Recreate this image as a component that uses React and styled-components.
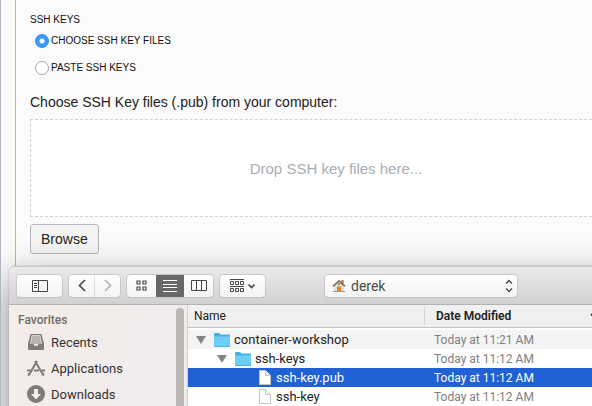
import React, { useState } from "react";
import styled, { createGlobalStyle } from "styled-components";

const GlobalStyle = createGlobalStyle`
  *, *::before, *::after { box-sizing: border-box; }
  body {
    margin: 0;
    background: #fbfbfb;
    color: #222;
    font-family: "Liberation Sans", Arial, sans-serif;
    overflow: hidden;
  }
  button, input, select { font: inherit; color: inherit; margin: 0; }
`;

const system = `Roboto, "Noto Sans", sans-serif`;

const Page = styled.div`
  position: relative;
  min-height: 100vh;
  padding-left: 14px;
  border-left: 1px solid #b0b5c4;
  overflow: hidden;
`;

const Panel = styled.main`
  min-height: 100vh;
  padding: 13px 0 0 14px;
  border-left: 1px solid #b0b5c4;
`;

const Fieldset = styled.fieldset`
  margin: 0;
  padding: 0;
  border: 0;
`;

const Legend = styled.legend`
  padding: 0;
  color: #111;
  font-size: 10px;
  line-height: 14px;
`;

const RadioLabel = styled.label`
  display: flex;
  align-items: center;
  gap: 2px;
  height: 27px;
  padding-left: 5px;
  color: #111;
  font-size: 10px;
`;

const Radio = styled.input`
  appearance: none;
  width: 14px;
  height: 14px;
  border: 1px solid #a9a9a9;
  border-radius: 50%;
  background: #fff;
  &:checked {
    border-color: #2c8df5;
    background: radial-gradient(circle, #fff 2px, #3b99fc 3px);
  }
`;

const Prompt = styled.p`
  margin: 13px 0 8px;
  font-size: 14px;
  line-height: 17px;
`;

const DropZone = styled.div`
  display: flex;
  align-items: center;
  justify-content: center;
  height: 98px;
  margin-right: -50px;
  border: 1px dashed #d0d2d6;
  background: #fff;
  color: #a9aeb6;
  font-size: 15px;
`;

const Browse = styled.button`
  height: 30px;
  margin-top: 7px;
  padding: 0 10px;
  border: 1px solid #b0b6c2;
  border-radius: 3px;
  background: #f4f4f4;
  font-size: 14px;
`;

const FinderWindow = styled.section`
  position: absolute;
  inset: 266px 0 0 8px;
  display: flex;
  flex-direction: column;
  overflow: hidden;
  border-top: 1px solid #c9c9c9;
  border-radius: 6px 0 0 0;
  font-family: ${system};
  font-size: 13px;
`;

const WindowShadow = styled.div`
  position: absolute;
  inset: 266px -40px -40px 8px;
  border-radius: 6px 0 0 0;
  box-shadow: 0 12px 36px rgba(0, 0, 0, 0.45), 0 0 1px rgba(0, 0, 0, 0.5);
`;

const Toolbar = styled.header`
  display: flex;
  flex: none;
  align-items: center;
  height: 38px;
  padding: 0 75px 0 8px;
  border-bottom: 1px solid #b4b2b4;
  background: linear-gradient(#ebe9eb, #d2d0d2);
`;

const Group = styled.div`
  display: flex;
  flex: none;
  gap: ${(p) => (p.$split ? "1px" : "0")};
  margin-right: 7px;
  border-radius: 4px;
  box-shadow: 0 0 0 1px #cac8ca, 0 1px 1px #aaa8aa;
`;

const ToolButton = styled.button`
  display: flex;
  align-items: center;
  justify-content: center;
  width: ${(p) => p.$width}px;
  height: 22px;
  padding: 0;
  border: 0;
  background: ${(p) => (p.$active ? "#686868" : "linear-gradient(#fff, #f3f3f3)")};
  color: ${(p) => (p.$active ? "#fff" : p.$dim ? "#b5b5b5" : "#484848")};
  &:first-child { border-radius: 4px 0 0 4px; }
  &:last-child { border-radius: 0 4px 4px 0; }
  &:only-child { border-radius: 4px; }
`;

const PathControl = styled.label`
  display: flex;
  align-items: center;
  width: 192px;
  height: 22px;
  margin-left: auto;
  padding: 0 4px 0 7px;
  border-radius: 4px;
  background: linear-gradient(#fff, #f3f3f3);
  box-shadow: 0 0 0 1px #cac8ca, 0 1px 1px #aaa8aa;
  color: #4b4b4b;
`;

const PathSelect = styled.select`
  appearance: none;
  flex: 1;
  min-width: 0;
  padding: 0 0 0 5px;
  border: 0;
  background: transparent;
  font-size: 14px;
`;

const Body = styled.div`
  display: flex;
  flex: 1;
  min-height: 0;
`;

const Sidebar = styled.nav`
  display: flex;
  flex: none;
  justify-content: space-between;
  width: 179px;
  padding: 3px 3px 0 9px;
  border-right: 1px solid #d4d0cf;
  background: linear-gradient(110deg, #f3ece8, #f1edee);
`;

const SidebarTitle = styled.h2`
  margin: 5px 0 1px;
  color: #706c6a;
  font-size: 12px;
  font-weight: 500;
  line-height: 15px;
`;

const Place = styled.a`
  display: flex;
  align-items: center;
  gap: 6px;
  height: 26px;
  padding-left: 9px;
  color: #343230;
  font-size: 13px;
  text-decoration: none;
`;

const Thumb = styled.div`
  width: 8px;
  border-radius: 4px 4px 0 0;
  background: #bcb7b5;
`;

const Listing = styled.div`
  flex: 1;
  min-width: 0;
  overflow: hidden;
  background: #fff;
`;

const Table = styled.table`
  width: 100%;
  table-layout: fixed;
  border-spacing: 0;
  tbody::before { content: ""; display: block; height: 2px; }
`;

const HeadCell = styled.th`
  width: ${(p) => (p.$date ? "168px" : "auto")};
  height: 23px;
  padding: 0 0 0 ${(p) => (p.$date ? 0 : 6)}px;
  border-bottom: 1px solid #c4c4c4;
  background: #f0f0f0;
  font-size: 12px;
  font-weight: ${(p) => (p.$date ? 600 : 400)};
  text-align: left;
`;

const DateHead = styled.span`
  display: flex;
  align-items: center;
  justify-content: space-between;
  height: 18px;
  padding-left: 11px;
  border-left: 1px solid #d4d4d4;
  white-space: nowrap;
`;

const Row = styled.tr`
  height: 19px;
  background: ${(p) => (p.$selected ? "#2062d5" : p.$striped ? "#f4f4f4" : "#fff")};
  color: ${(p) => (p.$selected ? "#fff" : "#222")};
`;

const NameCell = styled.td`
  padding: 0 0 0 8px;
  line-height: 18px;
  white-space: nowrap;
`;

const DateCell = styled.td`
  padding: 0 0 0 10px;
  color: ${(p) => (p.$muted ? "#808080" : "inherit")};
  font-size: 12px;
  line-height: 18px;
  white-space: nowrap;
`;

const FileName = styled.span`
  display: flex;
  align-items: center;
  gap: ${(p) => (p.$file ? 5 : 4)}px;
  height: 18px;
  padding-left: ${(p) => p.$depth * 21}px;
`;

const Disclosure = styled.button`
  display: flex;
  margin-right: 4px;
  padding: 0;
  border: 0;
  background: none;
`;

const Svg = ({ w, h, children, ...rest }) => (
  <svg width={w} height={h} viewBox={`0 0 ${w} ${h}`} fill="none" stroke="currentColor" aria-hidden="true" {...rest}>
    {children}
  </svg>
);

const SidebarIcon = () => (
  <Svg w={16} h={12}>
    <path d="M.5.5h15v11H.5zM6.5.5v11M2 3.5h3M2 5.5h3M2 7.5h3" />
  </Svg>
);
const ChevronIcon = ({ right }) => (
  <Svg w={8} h={13} strokeWidth="1.7">
    <path d={right ? "M1 1l5.5 5.5L1 12" : "M7 1L1.5 6.5 7 12"} />
  </Svg>
);
const GridIcon = () => (
  <Svg w={11} h={11}>
    <path d="M1 1h3v3H1zM7 1h3v3H7zM1 7h3v3H1zM7 7h3v3H7z" strokeWidth="1.2" />
  </Svg>
);
const ListIcon = () => (
  <Svg w={14} h={12}>
    <path d="M0 .5h14M0 4.5h14M0 7.5h14M0 11.5h14" />
  </Svg>
);
const ColumnsIcon = () => (
  <Svg w={16} h={11}>
    <path d="M.5.5h15v10H.5zM5.5.5v10M10.5.5v10" />
  </Svg>
);
const ArrangeIcon = () => (
  <Svg w={25} h={14}>
    <path d="M0 .5h14M0 7.5h14M.5 2.5h3v3h-3zM5.5 2.5h3v3h-3zM10.5 2.5h3v3h-3zM.5 9.5h3v3h-3zM5.5 9.5h3v3h-3zM10.5 9.5h3v3h-3z" />
    <path d="M18.5 5.5l3 3 3-3" strokeWidth="1.6" />
  </Svg>
);
const HomeIcon = () => (
  <Svg w={14} h={13} stroke="none">
    <path d="M9.5 1h2v4h-2z" fill="#a06a49" />
    <path d="M2 6l5-4 5 4v6.5H2z" fill="#dededb" />
    <path d="M1 7.3L7 1.8l6 5.5" fill="none" stroke="#8c6b4c" strokeWidth="1.6" />
    <circle cx="7" cy="5" r="1" fill="#66798a" />
    <path d="M5 7.5h4v5H5z" fill="#e98326" />
    <path d="M1 12.5h12" stroke="#9b9b90" />
  </Svg>
);
const StepperIcon = () => (
  <Svg w={8} h={14} strokeWidth="1.4">
    <path d="M1 4.5l3-3 3 3M1 9.5l3 3 3-3" />
  </Svg>
);
const RecentsIcon = () => (
  <Svg w={18} h={18} stroke="none">
    <path d="M3.5 1h11L17 11v5q0 1-1 1H2q-1 0-1-1v-5z" fill="#817b78" />
    <path d="M4.7 2.2h8.6l1.6 8.6h-3.3l-.8 2H7.2l-.8-2H3.1z" fill="#f2edea" />
    <path d="M5 4h8M4.8 6h8.4M4.4 8h9.2M4 10h10" stroke="#817b78" />
  </Svg>
);
const ApplicationsIcon = () => (
  <Svg w={18} h={18} stroke="#817b78">
    <path d="M8 2l8 13.5M10 2L2.3 15.5" strokeWidth="2" />
    <path d="M0 11.5h4M7 11.5h5M15 11.5h3" strokeWidth="2" />
    <path d="M1.3 14v3l2-1.5M16.7 14v3l-2-1.5" />
  </Svg>
);
const DownloadsIcon = () => (
  <Svg w={18} h={18} stroke="none">
    <circle cx="9" cy="9" r="9" fill="#817b78" />
    <path d="M7 4h4v5h3l-5 5.5L4 9h3z" fill="#f4efec" />
  </Svg>
);
const TriangleIcon = () => (
  <Svg w={10} h={8} stroke="none">
    <path d="M0 0h10L5 8z" fill="#858585" />
  </Svg>
);
const FolderIcon = () => (
  <Svg w={16} h={14} stroke="none">
    <path d="M0 1q0-1 1-1h4l1.5 1.5H15q1 0 1 1V13q0 1-1 1H1q-1 0-1-1z" fill="#43b3df" />
    <path d="M0 3.5h16V12q0 1-1 1H1q-1 0-1-1z" fill="#70cdf6" />
  </Svg>
);
const FileIcon = () => (
  <Svg w={12} h={15} stroke="#c5c5c5">
    <path d="M.5.5h6l5 5v9H.5z" fill="#fff" />
    <path d="M6.5.5v5h5" fill="#f1f1f1" />
  </Svg>
);
const SortIcon = () => (
  <Svg w={8} h={6} strokeWidth="1.6">
    <path d="M1 1l3 3 3-3" />
  </Svg>
);

const SortArrow = styled.span`
  display: flex;
  margin-right: -6px;
`;

const places = [
  ["Recents", RecentsIcon],
  ["Applications", ApplicationsIcon],
  ["Downloads", DownloadsIcon],
];

const files = [
  { name: "container-workshop", date: "Today at 11:21 AM", depth: 0, folder: true },
  { name: "ssh-keys", date: "Today at 11:12 AM", depth: 1, folder: true },
  { name: "ssh-key.pub", date: "Today at 11:12 AM", depth: 3 },
  { name: "ssh-key", date: "Today at 11:12 AM", depth: 3 },
];

function Finder() {
  const [selected, setSelected] = useState("ssh-key.pub");
  return (
    <FinderWindow aria-label="Choose files">
      <Toolbar>
        <Group>
          <ToolButton $width={45} aria-label="Toggle sidebar"><SidebarIcon /></ToolButton>
        </Group>
        <Group $split>
          <ToolButton $width={25} aria-label="Back"><ChevronIcon /></ToolButton>
          <ToolButton $width={25} $dim aria-label="Forward"><ChevronIcon right /></ToolButton>
        </Group>
        <Group>
          <ToolButton $width={29} aria-label="Icon view"><GridIcon /></ToolButton>
          <ToolButton $width={28} $active aria-label="List view"><ListIcon /></ToolButton>
          <ToolButton $width={29} aria-label="Column view"><ColumnsIcon /></ToolButton>
        </Group>
        <Group>
          <ToolButton $width={45} aria-label="Arrange"><ArrangeIcon /></ToolButton>
        </Group>
        <PathControl>
          <HomeIcon />
          <PathSelect aria-label="Location">
            <option>derek</option>
          </PathSelect>
          <StepperIcon />
        </PathControl>
      </Toolbar>
      <Body>
        <Sidebar>
          <div>
            <SidebarTitle>Favorites</SidebarTitle>
            {places.map(([name, Icon]) => (
              <Place href="#" key={name}><Icon />{name}</Place>
            ))}
          </div>
          <Thumb />
        </Sidebar>
        <Listing>
          <Table>
            <thead>
              <tr>
                <HeadCell>Name</HeadCell>
                <HeadCell $date>
                  <DateHead>Date Modified<SortArrow><SortIcon /></SortArrow></DateHead>
                </HeadCell>
              </tr>
            </thead>
            <tbody>
              {files.map((f, i) => (
                <Row key={f.name} $selected={selected === f.name} $striped={i === 0} onClick={() => setSelected(f.name)}>
                  <NameCell>
                    <FileName $depth={f.depth} $file={!f.folder}>
                      {f.folder && <Disclosure aria-label={`Collapse ${f.name}`}><TriangleIcon /></Disclosure>}
                      {f.folder ? <FolderIcon /> : <FileIcon />}
                      {f.name}
                    </FileName>
                  </NameCell>
                  <DateCell $muted={selected !== f.name}>{f.date}</DateCell>
                </Row>
              ))}
            </tbody>
          </Table>
        </Listing>
      </Body>
    </FinderWindow>
  );
}

export default function App() {
  return (
    <>
      <GlobalStyle />
      <Page>
        <Panel>
          <Fieldset>
            <Legend>SSH KEYS</Legend>
            <RadioLabel><Radio type="radio" name="source" defaultChecked />CHOOSE SSH KEY FILES</RadioLabel>
            <RadioLabel><Radio type="radio" name="source" />PASTE SSH KEYS</RadioLabel>
          </Fieldset>
          <Prompt>Choose SSH Key files (.pub) from your computer:</Prompt>
          <DropZone>Drop SSH key files here...</DropZone>
          <Browse>Browse</Browse>
        </Panel>
        <WindowShadow />
        <Finder />
      </Page>
    </>
  );
}
